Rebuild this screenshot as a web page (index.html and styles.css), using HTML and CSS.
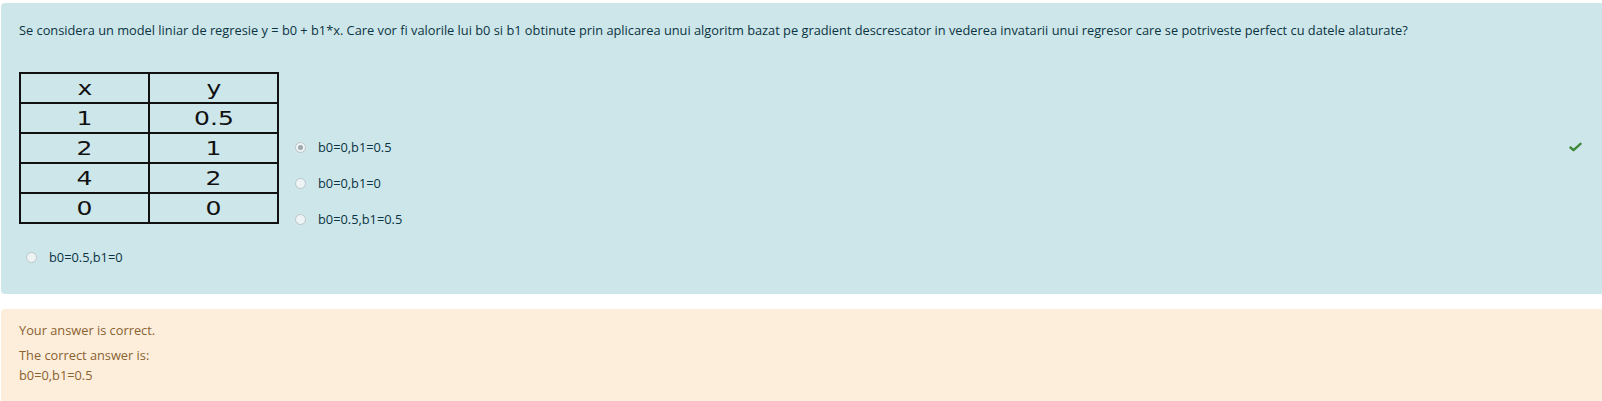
FILE: index.html
```html
<!DOCTYPE html>
<html>
<head>
<meta charset="utf-8">
<link rel="stylesheet" href="styles.css">
</head>
<body>
<div class="page">
  <div class="formulation">
    <p class="qtext">Se considera un model liniar de regresie y = b0 + b1*x. Care vor fi valorile lui b0 si b1 obtinute prin aplicarea unui algoritm bazat pe gradient descrescator in vederea invatarii unui regresor care se potriveste perfect cu datele alaturate?</p>
    <div class="row">
      <table class="data">
        <tr><td><span class="v">x</span></td><td><span class="v">y</span></td></tr>
        <tr><td><span class="v">1</span></td><td><span class="v">0.5</span></td></tr>
        <tr><td><span class="v">2</span></td><td><span class="v">1</span></td></tr>
        <tr><td><span class="v">4</span></td><td><span class="v">2</span></td></tr>
        <tr><td><span class="v">0</span></td><td><span class="v">0</span></td></tr>
      </table>
      <div class="answers">
        <div class="opt">
          <span class="radio checked"></span><span class="lbl">b0=0,b1=0.5</span>
          <svg class="check" width="13" height="10" viewBox="0 0 13 10"><path d="M1.5 5.5 L4.5 8.2 L11.5 1.8" fill="none" stroke="#3f8a3a" stroke-width="2.4" stroke-linecap="round" stroke-linejoin="round"/></svg>
        </div>
        <div class="opt"><span class="radio"></span><span class="lbl">b0=0,b1=0</span></div>
        <div class="opt"><span class="radio"></span><span class="lbl">b0=0.5,b1=0.5</span></div>
      </div>
    </div>
    <div class="opt last"><span class="radio"></span><span class="lbl">b0=0.5,b1=0</span></div>
  </div>
  <div class="outcome">
    <p class="fb">Your answer is correct.</p>
    <p class="right">The correct answer is:<br>b0=0,b1=0.5</p>
  </div>
</div>
</body>
</html>
```
FILE: styles.css
```css
html, body {
  margin: 0;
  padding: 0;
  background: #ffffff;
  overflow: hidden;
}
body {
  font-family: "Open Sans", "Noto Sans", sans-serif;
  font-size: 12.8px;
}
.page {
  padding: 3px 0 0 1px;
}
.formulation {
  background: #cde6ea;
  color: #0b3442;
  border-radius: 4px;
  padding: 18px 24px 19px 18px;
  margin-right: -4px;
}
.qtext {
  margin: 0;
  line-height: 18px;
}
.row {
  display: flex;
  align-items: flex-start;
  margin-top: 33px;
}
.data {
  border-collapse: collapse;
  font-family: "DejaVu Sans", Verdana, sans-serif;
  font-size: 20px;
  color: #111;
}
.data tr {
  height: 30px;
}
.data td {
  border: 2px solid #111;
  width: 127px;
  padding: 0;
  text-align: center;
  vertical-align: middle;
  line-height: 22px;
}
.data .v {
  display: inline-block;
  transform: scaleX(1.25);
}
.answers {
  flex: 1;
  padding-top: 57px;
  padding-left: 16px;
}
.opt {
  display: flex;
  align-items: center;
  height: 36px;
}
.opt .lbl {
  margin-left: 12px;
}
.radio {
  width: 9px;
  height: 9px;
  border-radius: 50%;
  border: 1px solid #b9c6ca;
  background: #eef3f4;
  position: relative;
  flex: none;
}
.radio.checked::after {
  content: "";
  position: absolute;
  left: 2px;
  top: 2px;
  width: 5px;
  height: 5px;
  border-radius: 50%;
  background: #9fa8ab;
}
.check {
  margin-left: auto;
}
.opt.last {
  margin-top: 2px;
  padding-left: 7px;
}
.outcome {
  margin-top: 15px;
  background: #fdeedc;
  color: #8a6230;
  border-radius: 4px;
  padding: 11px 18px 30px;
  margin-right: -4px;
}
.outcome p {
  margin: 0;
  line-height: 20px;
}
.outcome .fb {
  margin-bottom: 5px;
}
```
